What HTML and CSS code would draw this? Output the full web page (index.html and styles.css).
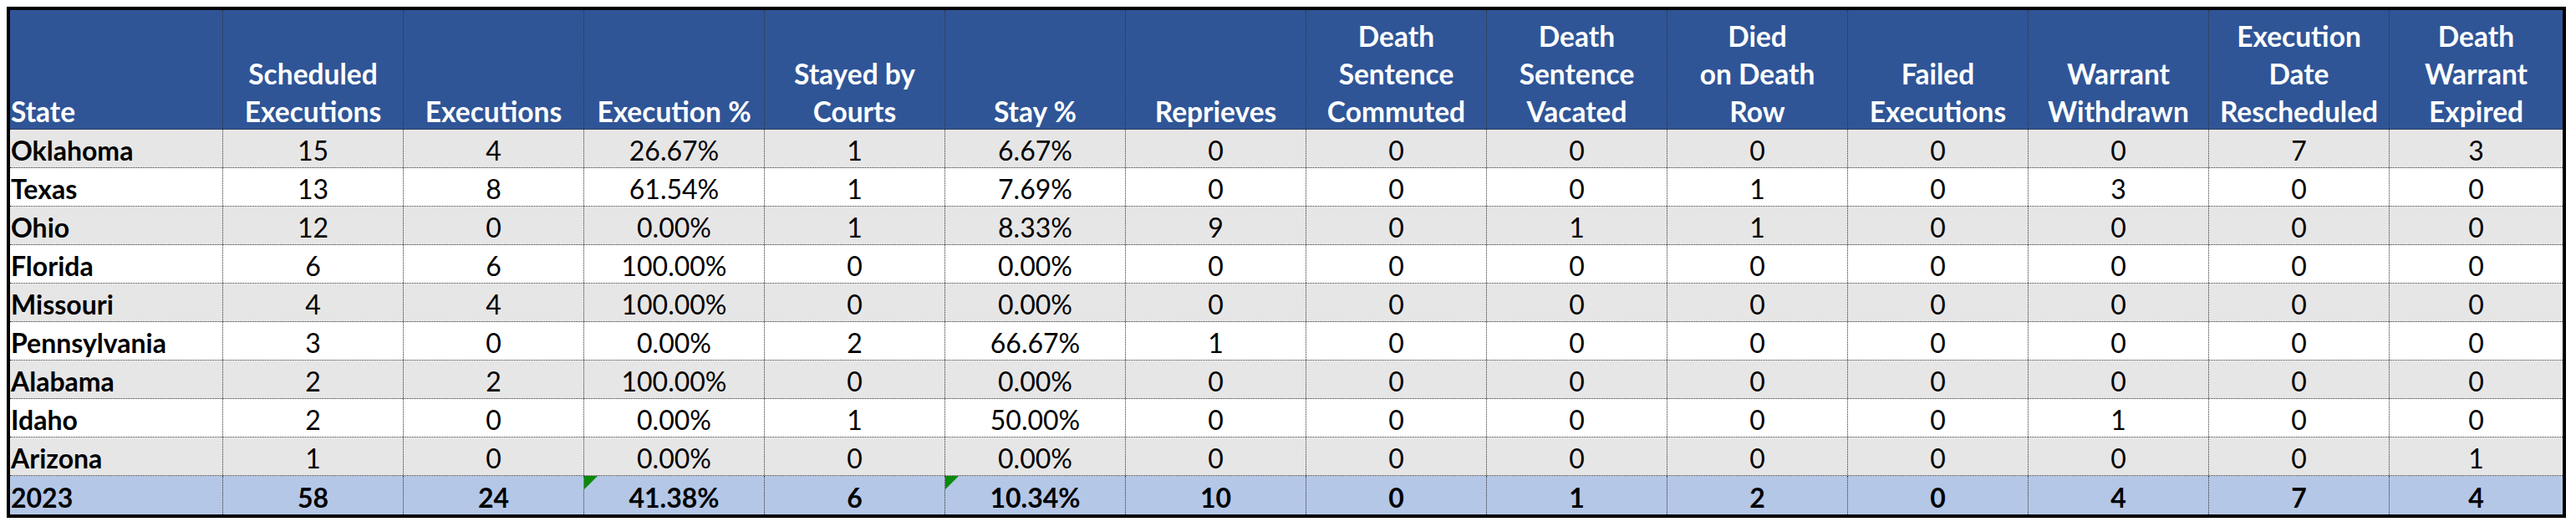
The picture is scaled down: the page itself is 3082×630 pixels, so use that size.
FILE: index.html
```html
<!DOCTYPE html>
<html lang="en">
<head>
<meta charset="utf-8">
<title>2023 Scheduled Executions</title>
<link rel="stylesheet" href="styles.css">
</head>
<body>
<div class="sheet">
  <div class="row head">
    <div class="cell state"><span class="label">State</span></div>
    <div class="cell"><span class="label">Scheduled<br>Executions</span></div>
    <div class="cell"><span class="label">Executions</span></div>
    <div class="cell"><span class="label">Execution %</span></div>
    <div class="cell"><span class="label">Stayed by<br>Courts</span></div>
    <div class="cell"><span class="label">Stay %</span></div>
    <div class="cell"><span class="label">Reprieves</span></div>
    <div class="cell"><span class="label">Death<br>Sentence<br>Commuted</span></div>
    <div class="cell"><span class="label">Death<br>Sentence<br>Vacated</span></div>
    <div class="cell"><span class="label">Died<br>on Death<br>Row</span></div>
    <div class="cell"><span class="label">Failed<br>Executions</span></div>
    <div class="cell"><span class="label">Warrant<br>Withdrawn</span></div>
    <div class="cell"><span class="label">Execution<br>Date<br>Rescheduled</span></div>
    <div class="cell"><span class="label">Death<br>Warrant<br>Expired</span></div>
  </div>

  <div class="row alt">
    <div class="cell state">Oklahoma</div>
    <div class="cell">15</div><div class="cell">4</div><div class="cell">26.67%</div><div class="cell">1</div><div class="cell">6.67%</div><div class="cell">0</div><div class="cell">0</div><div class="cell">0</div><div class="cell">0</div><div class="cell">0</div><div class="cell">0</div><div class="cell">7</div><div class="cell">3</div>
  </div>
  <div class="row">
    <div class="cell state">Texas</div>
    <div class="cell">13</div><div class="cell">8</div><div class="cell">61.54%</div><div class="cell">1</div><div class="cell">7.69%</div><div class="cell">0</div><div class="cell">0</div><div class="cell">0</div><div class="cell">1</div><div class="cell">0</div><div class="cell">3</div><div class="cell">0</div><div class="cell">0</div>
  </div>
  <div class="row alt">
    <div class="cell state">Ohio</div>
    <div class="cell">12</div><div class="cell">0</div><div class="cell">0.00%</div><div class="cell">1</div><div class="cell">8.33%</div><div class="cell">9</div><div class="cell">0</div><div class="cell">1</div><div class="cell">1</div><div class="cell">0</div><div class="cell">0</div><div class="cell">0</div><div class="cell">0</div>
  </div>
  <div class="row">
    <div class="cell state">Florida</div>
    <div class="cell">6</div><div class="cell">6</div><div class="cell">100.00%</div><div class="cell">0</div><div class="cell">0.00%</div><div class="cell">0</div><div class="cell">0</div><div class="cell">0</div><div class="cell">0</div><div class="cell">0</div><div class="cell">0</div><div class="cell">0</div><div class="cell">0</div>
  </div>
  <div class="row alt">
    <div class="cell state">Missouri</div>
    <div class="cell">4</div><div class="cell">4</div><div class="cell">100.00%</div><div class="cell">0</div><div class="cell">0.00%</div><div class="cell">0</div><div class="cell">0</div><div class="cell">0</div><div class="cell">0</div><div class="cell">0</div><div class="cell">0</div><div class="cell">0</div><div class="cell">0</div>
  </div>
  <div class="row">
    <div class="cell state">Pennsylvania</div>
    <div class="cell">3</div><div class="cell">0</div><div class="cell">0.00%</div><div class="cell">2</div><div class="cell">66.67%</div><div class="cell">1</div><div class="cell">0</div><div class="cell">0</div><div class="cell">0</div><div class="cell">0</div><div class="cell">0</div><div class="cell">0</div><div class="cell">0</div>
  </div>
  <div class="row alt">
    <div class="cell state">Alabama</div>
    <div class="cell">2</div><div class="cell">2</div><div class="cell">100.00%</div><div class="cell">0</div><div class="cell">0.00%</div><div class="cell">0</div><div class="cell">0</div><div class="cell">0</div><div class="cell">0</div><div class="cell">0</div><div class="cell">0</div><div class="cell">0</div><div class="cell">0</div>
  </div>
  <div class="row">
    <div class="cell state">Idaho</div>
    <div class="cell">2</div><div class="cell">0</div><div class="cell">0.00%</div><div class="cell">1</div><div class="cell">50.00%</div><div class="cell">0</div><div class="cell">0</div><div class="cell">0</div><div class="cell">0</div><div class="cell">0</div><div class="cell">1</div><div class="cell">0</div><div class="cell">0</div>
  </div>
  <div class="row alt">
    <div class="cell state">Arizona</div>
    <div class="cell">1</div><div class="cell">0</div><div class="cell">0.00%</div><div class="cell">0</div><div class="cell">0.00%</div><div class="cell">0</div><div class="cell">0</div><div class="cell">0</div><div class="cell">0</div><div class="cell">0</div><div class="cell">0</div><div class="cell">0</div><div class="cell">1</div>
  </div>
  <div class="row total">
    <div class="cell state">2023</div>
    <div class="cell">58</div><div class="cell">24</div><div class="cell flag">41.38%</div><div class="cell">6</div><div class="cell flag">10.34%</div><div class="cell">10</div><div class="cell">0</div><div class="cell">1</div><div class="cell">2</div><div class="cell">0</div><div class="cell">4</div><div class="cell">7</div><div class="cell">4</div>
  </div>
</div>
</body>
</html>
```

FILE: styles.css
```css
* {
  box-sizing: border-box;
}

body {
  margin: 8px;
  background: #ffffff;
  font-family: Lato, "Open Sans", "Liberation Sans", sans-serif;
  color: #000000;
}

.sheet {
  width: 3062px;
  border: 4px solid #000000;
}

.row {
  display: grid;
  grid-template-columns: 255px repeat(12, 216px) 207px;
  height: 46px;
  border-bottom: 1px dotted #333333;
  background: #ffffff;
}

.row.alt {
  background: #e7e6e6;
}

.row.total {
  background: #b4c7e7;
  border-bottom: none;
  font-weight: 700;
}

.row.head {
  height: 143px;
  background: #2f5597;
  color: #ffffff;
  font-weight: 700;
}

.cell {
  display: flex;
  align-items: flex-end;
  justify-content: center;
  text-align: center;
  font-size: 32px;
  line-height: 40px;
  border-right: 1px dotted #333333;
  white-space: nowrap;
}

.cell:last-child {
  border-right: none;
}

.cell.state {
  justify-content: flex-start;
  text-align: left;
  padding-left: 1px;
  font-weight: 700;
}

.head .cell {
  line-height: 45px;
  font-size: 33.5px;
}

.head .label {
  margin-bottom: -2px;
}

.flag {
  position: relative;
}

.flag::before {
  content: "";
  position: absolute;
  left: 0;
  top: 0;
  border-top: 16px solid #0a8a0a;
  border-right: 16px solid transparent;
}
```
